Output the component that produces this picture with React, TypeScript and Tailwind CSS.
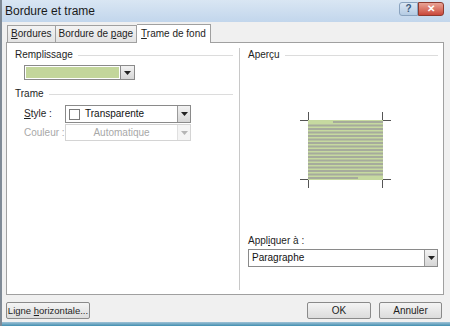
import React from "react";

const font = { fontFamily: '"Liberation Sans", Arial, sans-serif' };

const Arrow = ({ disabled }: { disabled?: boolean }) => (
	<svg width="7" height="4" viewBox="0 0 7 4">
		<path d="M0 0h7L3.5 4z" fill={disabled ? "#b5b5b5" : "#222"} />
	</svg>
);

const DropButton = ({ disabled }: { disabled?: boolean }) => (
	<div
		className={`w-[13px] self-stretch flex items-center justify-center border-l ${
			disabled ? "border-[#e0e0e0] bg-[#f4f4f4]" : "border-[#9a9a9a] bg-gradient-to-b from-[#f2f2f2] to-[#d6d6d6]"
		}`}
	>
		<Arrow disabled={disabled} />
	</div>
);

const GroupTitle = ({ label }: { label: string }) => (
	<div className="flex items-center gap-[5px] text-[10px] text-[#1e1e1e] leading-none">
		<span className="whitespace-nowrap">{label}</span>
		<div className="flex-1 h-px bg-[#dcdcdc]" />
	</div>
);

const Preview = () => {
	const rows = Array.from({ length: 17 }, (_, i) => i);
	return (
		<svg width="91" height="76" viewBox="0 0 91 76">
			{/* corner marks */}
			<path d="M0 8.5h8.5V0" stroke="#555" fill="none" />
			<path d="M91 8.5h-8.5V0" stroke="#555" fill="none" />
			<path d="M0 67.5h8.5V76" stroke="#555" fill="none" />
			<path d="M91 67.5h-8.5V76" stroke="#555" fill="none" />
			<rect x="8" y="8" width="75" height="60" fill="#c6d9a0" />
			{rows.map((i) => {
				const y = 9 + i * 3.5;
				if (i === 0) return <rect key={i} x="33" y={y} width="50" height="2" fill="#a6ab9c" />;
				if (i === 16) return <rect key={i} x="8" y={y} width="50" height="2" fill="#a6ab9c" />;
				return <rect key={i} x="8" y={y} width="75" height="2" fill="#a6ab9c" />;
			})}
		</svg>
	);
};

const tabBase = "h-[17px] px-[3px] flex items-center border border-b-0 border-[#a0a0a0] text-[10px] text-[#1e1e1e] leading-none whitespace-nowrap";

export default function App() {
	return (
		<div
			style={font}
			className="w-[450px] h-[326px] flex flex-col bg-[#f0f0f0] border-l-[2px] border-l-[#7f8a96] overflow-hidden"
		>
			{/* title bar */}
			<div className="h-[22px] flex items-center justify-between bg-gradient-to-b from-[#d9e6f3] to-[#c2d6ec] pl-[3px] pr-[6px]">
				<span className="text-[12px] text-[#1a1a1a] leading-none">Bordure et trame</span>
				<div className="flex items-start self-start mt-[2px]">
					<div className="w-[19px] h-[14px] rounded-l-[3px] border border-[#8aa3bf] bg-gradient-to-b from-[#dbe7f4] to-[#b4cbe3] flex items-center justify-center text-[10px] font-bold text-[#3b5a7c] leading-none">
						?
					</div>
					<div className="w-[26px] h-[14px] rounded-r-[3px] border border-[#8e3a2f] bg-gradient-to-b from-[#e8a396] to-[#c9463a] flex items-center justify-center text-[10px] font-bold text-white leading-none">
						✕
					</div>
				</div>
			</div>

			<div className="flex-1 flex flex-col px-[4px] pt-[1px]">
				{/* tabs */}
				<div className="flex items-end h-[19px] pl-px">
					<div className={`${tabBase} bg-gradient-to-b from-[#f3f3f3] to-[#e3e3e3]`}>
						<span><u>B</u>ordures</span>
					</div>
					<div className={`${tabBase} border-l-0 bg-gradient-to-b from-[#f3f3f3] to-[#e3e3e3]`}>
						<span>Bordure de <u>p</u>age</span>
					</div>
					<div className={`${tabBase} border-l-0 h-[19px] px-[4px] bg-white -mb-px relative z-10`}>
						<span><u>T</u>rame de fond</span>
					</div>
				</div>

				{/* tab panel */}
				<div className="h-[253px] w-[438px] border border-[#a0a0a0] bg-white flex pt-[7px] pb-[6px]">
					{/* left column */}
					<div className="w-[232px] flex flex-col pl-[8px] pr-[6px]">
						<GroupTitle label="Remplissage" />
						<div className="flex mt-[5px] ml-[9px] h-[15px]">
							<div className="w-[97px] border border-[#8a8a8a] p-px bg-white">
								<div className="w-full h-full bg-[#c3d69b]" />
							</div>
							<div className="w-[14px] border border-l-0 border-[#8a8a8a] bg-gradient-to-b from-[#f2f2f2] to-[#d6d6d6] flex items-center justify-center">
								<Arrow />
							</div>
						</div>

						<div className="mt-[9px]">
							<GroupTitle label="Trame" />
						</div>
						<div className="flex items-center mt-[6px] ml-[9px]">
							<span className="w-[41px] shrink-0 text-[10px] text-[#1e1e1e] leading-none whitespace-nowrap"><u>S</u>tyle :</span>
							<div className="flex w-[126px] h-[18px] border border-[#8a8a8a] bg-white">
								<div className="flex-1 flex items-center pl-[3px]">
									<div className="w-[11px] h-[11px] border border-[#7a7a7a] bg-white" />
									<span className="ml-[5px] text-[10px] text-[#111] leading-none">Transparente</span>
								</div>
								<DropButton />
							</div>
						</div>
						<div className="flex items-center mt-px ml-[9px]">
							<span className="w-[41px] shrink-0 text-[10px] text-[#a8a8a8] leading-none whitespace-nowrap">Couleur :</span>
							<div className="flex w-[126px] h-[17px] border border-[#d4d4d4] bg-white">
								<div className="flex-1 flex items-center justify-center text-[10px] text-[#a8a8a8] leading-none">
									Automatique
								</div>
								<DropButton disabled />
							</div>
						</div>
					</div>

					{/* divider */}
					<div className="w-px bg-[#c8c8c8] mt-[-2px] mb-[-2px]" />

					{/* right column */}
					<div className="flex-1 flex flex-col pl-[8px] pr-[5px]">
						<GroupTitle label="Aperçu" />
						<div className="flex justify-center mt-[52px] ml-[4px]">
							<Preview />
						</div>
						<div className="mt-auto mb-[21px]">
							<div className="text-[10px] text-[#1e1e1e] leading-none">
								Appl<u>i</u>quer à :
							</div>
							<div className="flex h-[18px] mt-[3px] border border-[#8a8a8a] bg-white">
								<div className="flex-1 flex items-center pl-[3px] text-[10px] text-[#111] leading-none">
									Paragraphe
								</div>
								<DropButton />
							</div>
						</div>
					</div>
				</div>

				{/* footer */}
				<div className="flex items-center mt-[7px] h-[17px]">
					<button className="h-[17px] w-[84px] px-0 border border-[#8a8a8a] rounded-[2px] bg-gradient-to-b from-[#f4f4f4] to-[#dcdcdc] text-[9.5px] text-[#1e1e1e] leading-none whitespace-nowrap">
						Ligne <u>h</u>orizontale...
					</button>
					<div className="flex-1" />
					<button className="h-[17px] w-[64px] border border-[#8a8a8a] rounded-[2px] bg-gradient-to-b from-[#f4f4f4] to-[#dcdcdc] text-[10px] text-[#1e1e1e] leading-none">
						OK
					</button>
					<button className="h-[17px] w-[63px] ml-[8px] mr-[4px] border border-[#8a8a8a] rounded-[2px] bg-gradient-to-b from-[#f4f4f4] to-[#dcdcdc] text-[10px] text-[#1e1e1e] leading-none">
						Annuler
					</button>
				</div>
			</div>
			<div className="h-[4px] bg-gradient-to-b from-[#9fc2d6] to-[#3f8fb0]" />
		</div>
	);
}
